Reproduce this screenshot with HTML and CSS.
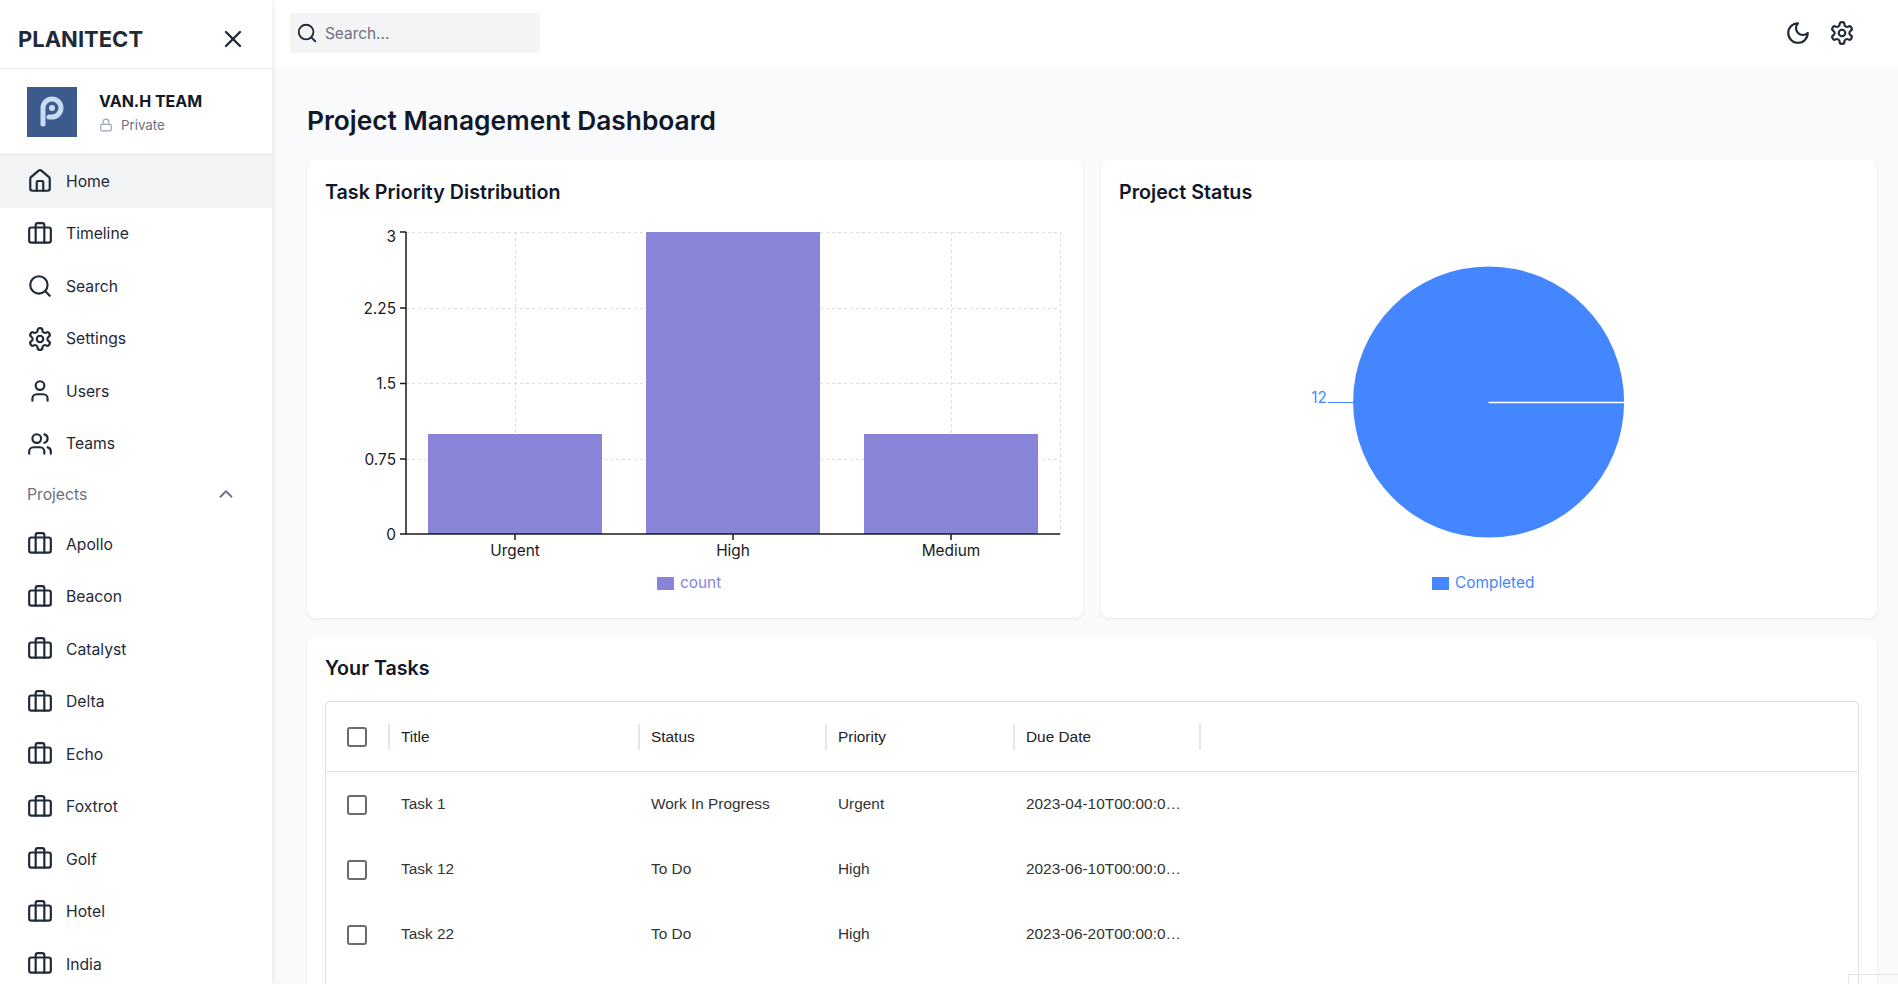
FILE: index.html
```html
<!DOCTYPE html>
<html lang="en">
<head>
  <meta charset="UTF-8">
  <title>Planitect</title>
  <link rel="stylesheet" href="styles.css">
</head>
<body>
<svg class="defs" width="0" height="0">
  <symbol id="i-home" viewBox="0 0 24 24"><path d="M15 21v-8a1 1 0 0 0-1-1h-4a1 1 0 0 0-1 1v8"/><path d="M3 10a2 2 0 0 1 .709-1.528l7-5.999a2 2 0 0 1 2.582 0l7 5.999A2 2 0 0 1 21 10v9a2 2 0 0 1-2 2H5a2 2 0 0 1-2-2z"/></symbol>
  <symbol id="i-case" viewBox="0 0 24 24"><path d="M16 20V4a2 2 0 0 0-2-2h-4a2 2 0 0 0-2 2v16"/><rect width="20" height="14" x="2" y="6" rx="2"/></symbol>
  <symbol id="i-search" viewBox="0 0 24 24"><circle cx="11" cy="11" r="8"/><path d="m21 21-4.3-4.3"/></symbol>
  <symbol id="i-gear" viewBox="0 0 24 24"><path d="M12.22 2h-.44a2 2 0 0 0-2 2v.18a2 2 0 0 1-1 1.73l-.43.25a2 2 0 0 1-2 0l-.15-.08a2 2 0 0 0-2.73.73l-.22.38a2 2 0 0 0 .73 2.73l.15.1a2 2 0 0 1 1 1.72v.51a2 2 0 0 1-1 1.74l-.15.09a2 2 0 0 0-.73 2.73l.22.38a2 2 0 0 0 2.73.73l.15-.08a2 2 0 0 1 2 0l.43.25a2 2 0 0 1 1 1.73V20a2 2 0 0 0 2 2h.44a2 2 0 0 0 2-2v-.18a2 2 0 0 1 1-1.73l.43-.25a2 2 0 0 1 2 0l.15.08a2 2 0 0 0 2.73-.73l.22-.39a2 2 0 0 0-.73-2.73l-.15-.08a2 2 0 0 1-1-1.74v-.5a2 2 0 0 1 1-1.74l.15-.09a2 2 0 0 0 .73-2.73l-.22-.38a2 2 0 0 0-2.73-.73l-.15.08a2 2 0 0 1-2 0l-.43-.25a2 2 0 0 1-1-1.73V4a2 2 0 0 0-2-2z"/><circle cx="12" cy="12" r="3"/></symbol>
  <symbol id="i-user" viewBox="0 0 24 24"><path d="M19 21v-2a4 4 0 0 0-4-4H9a4 4 0 0 0-4 4v2"/><circle cx="12" cy="7" r="4"/></symbol>
  <symbol id="i-users" viewBox="0 0 24 24"><path d="M16 21v-2a4 4 0 0 0-4-4H6a4 4 0 0 0-4 4v2"/><circle cx="9" cy="7" r="4"/><path d="M22 21v-2a4 4 0 0 0-3-3.87"/><path d="M16 3.13a4 4 0 0 1 0 7.75"/></symbol>
  <symbol id="i-up" viewBox="0 0 24 24"><path d="m18 15-6-6-6 6"/></symbol>
  <symbol id="i-moon" viewBox="0 0 24 24"><path d="M12 3a6 6 0 0 0 9 9 9 9 0 1 1-9-9Z"/></symbol>
  <symbol id="i-lock" viewBox="0 0 24 24"><rect width="18" height="11" x="3" y="11" rx="2" ry="2"/><path d="M7 11V7a5 5 0 0 1 10 0v4"/></symbol>
  <symbol id="i-x" viewBox="0 0 24 24"><path d="M18 6 6 18"/><path d="m6 6 12 12"/></symbol>
</svg>

<div class="app">
  <aside class="sidebar">
    <div class="brand">
      <span class="brand-name">PLANITECT</span>
      <svg class="icon icon-close"><use href="#i-x"/></svg>
    </div>
    <div class="team">
      <svg class="team-logo" viewBox="0 0 50 50">
        <rect width="50" height="50" fill="#3c5a8b"/>
        <path d="M16 37V21a9 9 0 1 1 9 9h-3" fill="none" stroke="#c9daf3" stroke-width="5" stroke-linecap="round"/>
        <circle cx="25" cy="21" r="3" fill="#c9daf3"/>
      </svg>
      <div>
        <div class="team-name">VAN.H TEAM</div>
        <div class="team-private"><svg class="icon icon-lock"><use href="#i-lock"/></svg>Private</div>
      </div>
    </div>
    <nav>
      <a class="nav-item active"><svg class="icon"><use href="#i-home"/></svg>Home</a>
      <a class="nav-item"><svg class="icon"><use href="#i-case"/></svg>Timeline</a>
      <a class="nav-item"><svg class="icon"><use href="#i-search"/></svg>Search</a>
      <a class="nav-item"><svg class="icon"><use href="#i-gear"/></svg>Settings</a>
      <a class="nav-item"><svg class="icon"><use href="#i-user"/></svg>Users</a>
      <a class="nav-item"><svg class="icon"><use href="#i-users"/></svg>Teams</a>
      <div class="nav-group">Projects<svg class="icon icon-up"><use href="#i-up"/></svg></div>
      <a class="nav-item"><svg class="icon"><use href="#i-case"/></svg>Apollo</a>
      <a class="nav-item"><svg class="icon"><use href="#i-case"/></svg>Beacon</a>
      <a class="nav-item"><svg class="icon"><use href="#i-case"/></svg>Catalyst</a>
      <a class="nav-item"><svg class="icon"><use href="#i-case"/></svg>Delta</a>
      <a class="nav-item"><svg class="icon"><use href="#i-case"/></svg>Echo</a>
      <a class="nav-item"><svg class="icon"><use href="#i-case"/></svg>Foxtrot</a>
      <a class="nav-item"><svg class="icon"><use href="#i-case"/></svg>Golf</a>
      <a class="nav-item"><svg class="icon"><use href="#i-case"/></svg>Hotel</a>
      <a class="nav-item"><svg class="icon"><use href="#i-case"/></svg>India</a>
    </nav>
  </aside>

  <div class="main">
    <header class="topbar">
      <div class="search-box">
        <svg class="icon icon-search"><use href="#i-search"/></svg>
        <span>Search...</span>
      </div>
      <div class="top-actions">
        <svg class="icon"><use href="#i-moon"/></svg>
        <svg class="icon"><use href="#i-gear"/></svg>
      </div>
    </header>

    <main class="content">
      <h1 class="page-title">Project Management Dashboard</h1>

      <div class="charts">
        <section class="card">
          <h2 class="card-title">Task Priority Distribution</h2>
          <svg class="chart" width="740" height="380">
            <g class="grid">
              <path d="M81 10.500H735M81 86.500H735M81 161.500H735M81 237.500H735"/>
              <path d="M190.500 10V312M408.500 10V312M626.500 10V312M735.500 10V312"/>
            </g>
            <rect x="103" y="212" width="174" height="100" fill="#8884d8"/>
            <rect x="321" y="10" width="174" height="302" fill="#8884d8"/>
            <rect x="539" y="212" width="174" height="100" fill="#8884d8"/>
            <path class="axis" d="M81 10V312H735M75 10H81M75 86H81M75 161.500H81M75 237H81M75 312H81M190 312V318M408 312V318M626 312V318"/>
            <g class="tick" text-anchor="end">
              <text x="71" y="20">3</text>
              <text x="71" y="92">2.25</text>
              <text x="71" y="167">1.5</text>
              <text x="71" y="243">0.75</text>
              <text x="71" y="318">0</text>
            </g>
            <g class="tick" text-anchor="middle">
              <text x="190" y="334">Urgent</text>
              <text x="408" y="334">High</text>
              <text x="626" y="334">Medium</text>
            </g>
            <rect x="332" y="355" width="17" height="13" fill="#8884d8"/>
            <text class="legend" x="355" y="366" fill="#8884d8">count</text>
          </svg>
        </section>

        <section class="card">
          <h2 class="card-title">Project Status</h2>
          <svg class="chart" width="740" height="380">
            <circle cx="369.600" cy="180" r="135.500" fill="#4486ff"/>
            <path d="M369.600 180.500H505" stroke="#fff" stroke-width="1.500"/>
            <path d="M209 180.500H235" stroke="#4486ff"/>
            <text class="legend" x="208" y="181" text-anchor="end" fill="#4486ff">12</text>
            <rect x="313" y="355" width="17" height="13" fill="#4486ff"/>
            <text class="legend" x="336" y="366" fill="#4486ff">Completed</text>
          </svg>
        </section>
      </div>

      <section class="card tasks">
        <h2 class="card-title">Your Tasks</h2>
        <div class="table">
          <div class="row row-head">
            <div class="cell-check"><span class="checkbox"></span></div>
            <div class="cell sep">Title</div>
            <div class="cell sep">Status</div>
            <div class="cell sep">Priority</div>
            <div class="cell sep">Due Date</div>
            <div class="cell sep"></div>
          </div>
          <div class="row">
            <div class="cell-check"><span class="checkbox"></span></div>
            <div class="cell">Task 1</div>
            <div class="cell">Work In Progress</div>
            <div class="cell">Urgent</div>
            <div class="cell"><span class="clip">2023-04-10T00:00:00.000Z</span></div>
            <div class="cell"></div>
          </div>
          <div class="row">
            <div class="cell-check"><span class="checkbox"></span></div>
            <div class="cell">Task 12</div>
            <div class="cell">To Do</div>
            <div class="cell">High</div>
            <div class="cell"><span class="clip">2023-06-10T00:00:00.000Z</span></div>
            <div class="cell"></div>
          </div>
          <div class="row">
            <div class="cell-check"><span class="checkbox"></span></div>
            <div class="cell">Task 22</div>
            <div class="cell">To Do</div>
            <div class="cell">High</div>
            <div class="cell"><span class="clip">2023-06-20T00:00:00.000Z</span></div>
            <div class="cell"></div>
          </div>
        </div>
      </section>
    </main>
  </div>
</div>
<div class="corner-box"></div>
</body>
</html>
```

FILE: styles.css
```css
* {
  box-sizing: border-box;
  margin: 0;
  padding: 0;
}

body {
  height: 100vh;
  overflow: hidden;
  background: #fff;
  color: #111827;
  font-family: Inter, "Liberation Sans", sans-serif;
  font-size: 16px;
}

.defs {
  display: block;
  height: 0;
}

.icon {
  width: 26px;
  height: 26px;
  flex: none;
  fill: none;
  stroke: #1f2937;
  stroke-width: 2;
  stroke-linecap: round;
  stroke-linejoin: round;
}

.app {
  display: flex;
  height: 984px;
}

/* sidebar */
.sidebar {
  width: 272px;
  flex: none;
  overflow: hidden;
  background: #fff;
  box-shadow: 1px 0 6px rgba(0, 0, 0, 0.08);
  z-index: 1;
}

.brand {
  height: 69px;
  padding: 9px 25px 0 18px;
  display: flex;
  align-items: center;
  justify-content: space-between;
  border-bottom: 1px solid #e5e7eb;
}

.brand-name {
  font-size: 22px;
  font-weight: 700;
  color: #1f2937;
}

.icon-close {
  width: 28px;
  height: 28px;
}

.team {
  height: 86px;
  padding-left: 27px;
  display: flex;
  align-items: center;
  gap: 22px;
  border-bottom: 1px solid #e5e7eb;
}

.team-logo {
  width: 50px;
  height: 50px;
  flex: none;
}

.team-name {
  font-weight: 700;
  line-height: 24px;
}

.team-private {
  display: flex;
  align-items: center;
  gap: 8px;
  margin-top: 2px;
  font-size: 13.300px;
  color: #6b7280;
  line-height: 20px;
}

.icon-lock {
  width: 14px;
  height: 14px;
  stroke: #9ca3af;
}

.nav-item {
  height: 52.500px;
  padding-left: 27px;
  display: flex;
  align-items: center;
  gap: 13px;
  font-size: 15.700px;
  color: #1f2937;
}

.nav-item.active {
  background: #f3f4f6;
}

.nav-group {
  height: 48px;
  padding: 0 35px 0 27px;
  display: flex;
  align-items: center;
  justify-content: space-between;
  font-size: 15.700px;
  color: #6b7280;
}

.icon-up {
  width: 22px;
  height: 22px;
  stroke: #6b7280;
}

/* top bar */
.main {
  flex: 1;
  min-width: 0;
  display: flex;
  flex-direction: column;
}

.topbar {
  height: 68px;
  flex: none;
  padding: 0 43px 2px 18px;
  display: flex;
  align-items: center;
  justify-content: space-between;
  background: #fff;
}

.search-box {
  width: 250px;
  height: 40px;
  padding-left: 6px;
  display: flex;
  align-items: center;
  gap: 7px;
  background: #f3f4f6;
  font-size: 15.400px;
  color: #6b7280;
}

.icon-search {
  width: 22px;
  height: 22px;
}

.top-actions {
  display: flex;
  gap: 18px;
}

/* content */
.content {
  flex: 1;
  min-height: 0;
  overflow: hidden;
  padding: 35px 21px 0 35px;
  background: #f9fafb;
}

.page-title {
  font-size: 26.300px;
  font-weight: 600;
  line-height: 36px;
  margin-bottom: 21px;
}

.charts {
  display: grid;
  grid-template-columns: 1fr 1fr;
  gap: 18px;
}

.card {
  padding: 18px;
  border-radius: 8px;
  background: #fff;
  box-shadow: 0 1px 3px rgba(0, 0, 0, 0.08);
}

.card-title {
  font-size: 19.700px;
  font-weight: 600;
  line-height: 28px;
}

.chart {
  display: block;
  margin-top: 16px;
  margin-bottom: -2px;
}

.grid path {
  fill: none;
  stroke: #dcdcdc;
  stroke-dasharray: 3 3;
}

.axis {
  fill: none;
  stroke: #1a1a1a;
  stroke-width: 1.500;
}

.tick text {
  font-size: 15.400px;
  fill: #1a1a1a;
}

.legend {
  font-size: 15.400px;
}

/* tasks table */
.tasks {
  margin-top: 18px;
}

.table {
  min-height: 420px;
  margin-top: 19px;
  border: 1px solid #e0e0e0;
  border-radius: 4px;
  font-family: "Liberation Sans", Arial, sans-serif;
  font-size: 15.400px;
  color: #333;
}

.row {
  height: 65px;
  display: grid;
  grid-template-columns: 62px 250px 187px 188px 186px 1fr;
}

.row-head {
  height: 70px;
  border-bottom: 1px solid #e0e0e0;
  color: #222;
}

.cell-check {
  display: flex;
  align-items: center;
  justify-content: center;
}

.checkbox {
  width: 20px;
  height: 20px;
  border: 2px solid #6b6b6b;
  border-radius: 3px;
}

.cell {
  min-width: 0;
  padding: 0 12px 2px 13px;
  display: flex;
  align-items: center;
}

.row-head .cell {
  padding-bottom: 0;
}

.sep {
  background: linear-gradient(#e5e5e5, #e5e5e5) left center / 2px 26px no-repeat;
}

.clip {
  overflow: hidden;
  white-space: nowrap;
  text-overflow: ellipsis;
}

.corner-box {
  position: fixed;
  right: 0;
  bottom: 0;
  width: 50px;
  height: 10px;
  border: 1px solid #e5e5e5;
  border-width: 1px 0 0 1px;
}
```
